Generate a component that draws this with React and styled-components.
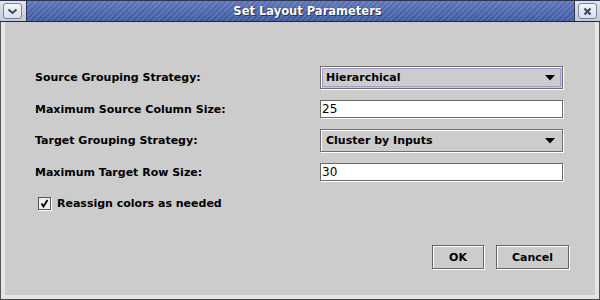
import React from 'react';
import styled, { createGlobalStyle } from 'styled-components';

const Global = createGlobalStyle`
  html, body { margin: 0; padding: 0; background: #cccccc; }
  body { width: 600px; height: 300px; overflow: hidden; font-family: "DejaVu Sans", "Liberation Sans", sans-serif; }
`;

const Window = styled.div`
  width: 600px;
  height: 300px;
  box-sizing: border-box;
  display: flex;
  flex-direction: column;
  background: #cccccc;
`;

const TitleBar = styled.div`
  height: 22px;
  box-sizing: border-box;
  display: flex;
  border-top: 1px solid #2e3752;
  border-bottom: 1px solid #1f2740;
  background: #c8cdd9;
`;

const Cap = styled.div`
  width: ${p => p.$w}px;
  display: flex;
  align-items: center;
  justify-content: ${p => p.$justify};
  padding: ${p => p.$pad};
  box-sizing: border-box;
  background: linear-gradient(#dfe3ec, #c4c9d6);
`;

const WinButton = styled.div`
  width: 19px;
  height: 16px;
  box-sizing: border-box;
  border: 1px solid #7a819b;
  border-radius: 3px;
  background: linear-gradient(#f4f5f9, #d9dde7);
  display: flex;
  align-items: center;
  justify-content: center;
`;

const Stripes = styled.div`
  flex: 1;
  display: flex;
  align-items: center;
  justify-content: center;
  padding-left: 14px;
  background:
    linear-gradient(rgba(255,255,255,0.12), rgba(0,0,0,0.08)),
    repeating-linear-gradient(135deg, #4661ab 0 2px, #5873bd 2px 4px);
  border-left: 1px solid #2e3752;
  border-right: 1px solid #2e3752;
  color: #ffffff;
  font: bold 11.5px "DejaVu Sans", sans-serif;
  text-shadow: 0 0 1px #1c2545, 1px 1px 0 #2a3566;
`;

const Body = styled.div`
  flex: 1;
  display: flex;
  flex-direction: column;
  border-left: 1px solid #555;
  border-right: 1px solid #555;
  border-bottom: 1px solid #444;
`;

const Inner = styled.div`
  flex: 1;
  display: flex;
  flex-direction: column;
  border-left: 4px solid #e6e6e6;
  border-right: 4px solid #e6e6e6;
  border-bottom: 4px solid #e6e6e6;
  padding: 44px 26px 0 30px;
`;

const Form = styled.div`
  display: grid;
  grid-template-columns: 285px 243px;
  row-gap: 11px;
  align-items: center;
`;

const Label = styled.div`
  font: bold 11px "DejaVu Sans", sans-serif;
  color: #000;
  white-space: nowrap;
`;

const Combo = styled.div`
  height: 23px;
  box-sizing: border-box;
  border: 1px solid #6e6e6e;
  box-shadow: 1px 1px 0 #ffffff, inset 1px 1px 0 #ffffff;
  background: #cccccc;
  padding: 1px;
  display: flex;
`;

const ComboFace = styled.div`
  flex: 1;
  display: flex;
  align-items: center;
  justify-content: space-between;
  padding: 0 5px 0 3px;
  border: 1px solid ${p => (p.$focused ? '#9c9ccf' : 'transparent')};
  font: bold 11px "DejaVu Sans", sans-serif;
  color: #000;
`;

const TextField = styled.div`
  height: 18px;
  box-sizing: border-box;
  border: 1px solid #6a6a6a;
  box-shadow: 1px 1px 0 #ffffff;
  background: #ffffff;
  padding-left: 1px;
  display: flex;
  align-items: center;
  font: 12px "DejaVu Sans", sans-serif;
  color: #000;
`;

const CheckRow = styled.label`
  margin-top: 11px;
  height: 23px;
  padding-left: 3px;
  display: flex;
  align-items: center;
  gap: 6px;
  font: bold 11px "DejaVu Sans", sans-serif;
  color: #000;
`;

const CheckBox = styled.div`
  width: 13px;
  height: 13px;
  box-sizing: border-box;
  border: 1px solid #555;
  box-shadow: 1px 1px 0 #ffffff;
  background: #eeeeee;
  display: flex;
  align-items: center;
  justify-content: center;
`;

const ButtonRow = styled.div`
  margin-top: 30px;
  display: flex;
  justify-content: flex-end;
  gap: 12px;
`;

const Button = styled.div`
  width: ${p => p.$w}px;
  height: 24px;
  box-sizing: border-box;
  border: 1px solid #666666;
  box-shadow: 1px 1px 0 #ffffff, inset 1px 1px 0 #ffffff;
  background: #cccccc;
  display: flex;
  align-items: center;
  justify-content: center;
  font: bold 11px "DejaVu Sans", sans-serif;
  color: #000;
`;

const Arrow = () => (
  <svg width="10" height="6" viewBox="0 0 10 6">
    <path d="M0 0 H10 L5 5.5 Z" fill="#000" />
  </svg>
);

const ComboBox = ({ value, focused }) => (
  <Combo>
    <ComboFace $focused={focused}>
      <span>{value}</span>
      <Arrow />
    </ComboFace>
  </Combo>
);

export default function App() {
  return (
    <>
      <Global />
      <Window>
        <TitleBar>
          <Cap $w={26} $justify="flex-start" $pad="0 0 0 3px">
            <WinButton>
              <svg width="11" height="7" viewBox="0 0 11 7">
                <path d="M1.5 1.5 L5.5 5 L9.5 1.5" stroke="#3f4766" strokeWidth="2" fill="none" />
              </svg>
            </WinButton>
          </Cap>
          <Stripes>Set Layout Parameters</Stripes>
          <Cap $w={25} $justify="flex-end" $pad="0 3px 0 0">
            <WinButton>
              <svg width="9" height="9" viewBox="0 0 9 9">
                <path d="M1.5 1.5 L7.5 7.5 M7.5 1.5 L1.5 7.5" stroke="#3f4766" strokeWidth="2.2" fill="none" />
              </svg>
            </WinButton>
          </Cap>
        </TitleBar>
        <Body>
          <Inner>
            <Form>
              <Label>Source Grouping Strategy:</Label>
              <ComboBox value="Hierarchical" focused />
              <Label>Maximum Source Column Size:</Label>
              <TextField>25</TextField>
              <Label>Target Grouping Strategy:</Label>
              <ComboBox value="Cluster by Inputs" />
              <Label>Maximum Target Row Size:</Label>
              <TextField>30</TextField>
            </Form>
            <CheckRow>
              <CheckBox>
                <svg width="9" height="9" viewBox="0 0 9 9">
                  <path d="M1.5 4.5 L3.5 7.5 L7.5 1" stroke="#000" strokeWidth="1.8" fill="none" />
                </svg>
              </CheckBox>
              Reassign colors as needed
            </CheckRow>
            <ButtonRow>
              <Button $w={52}>OK</Button>
              <Button $w={73}>Cancel</Button>
            </ButtonRow>
          </Inner>
        </Body>
      </Window>
    </>
  );
}
